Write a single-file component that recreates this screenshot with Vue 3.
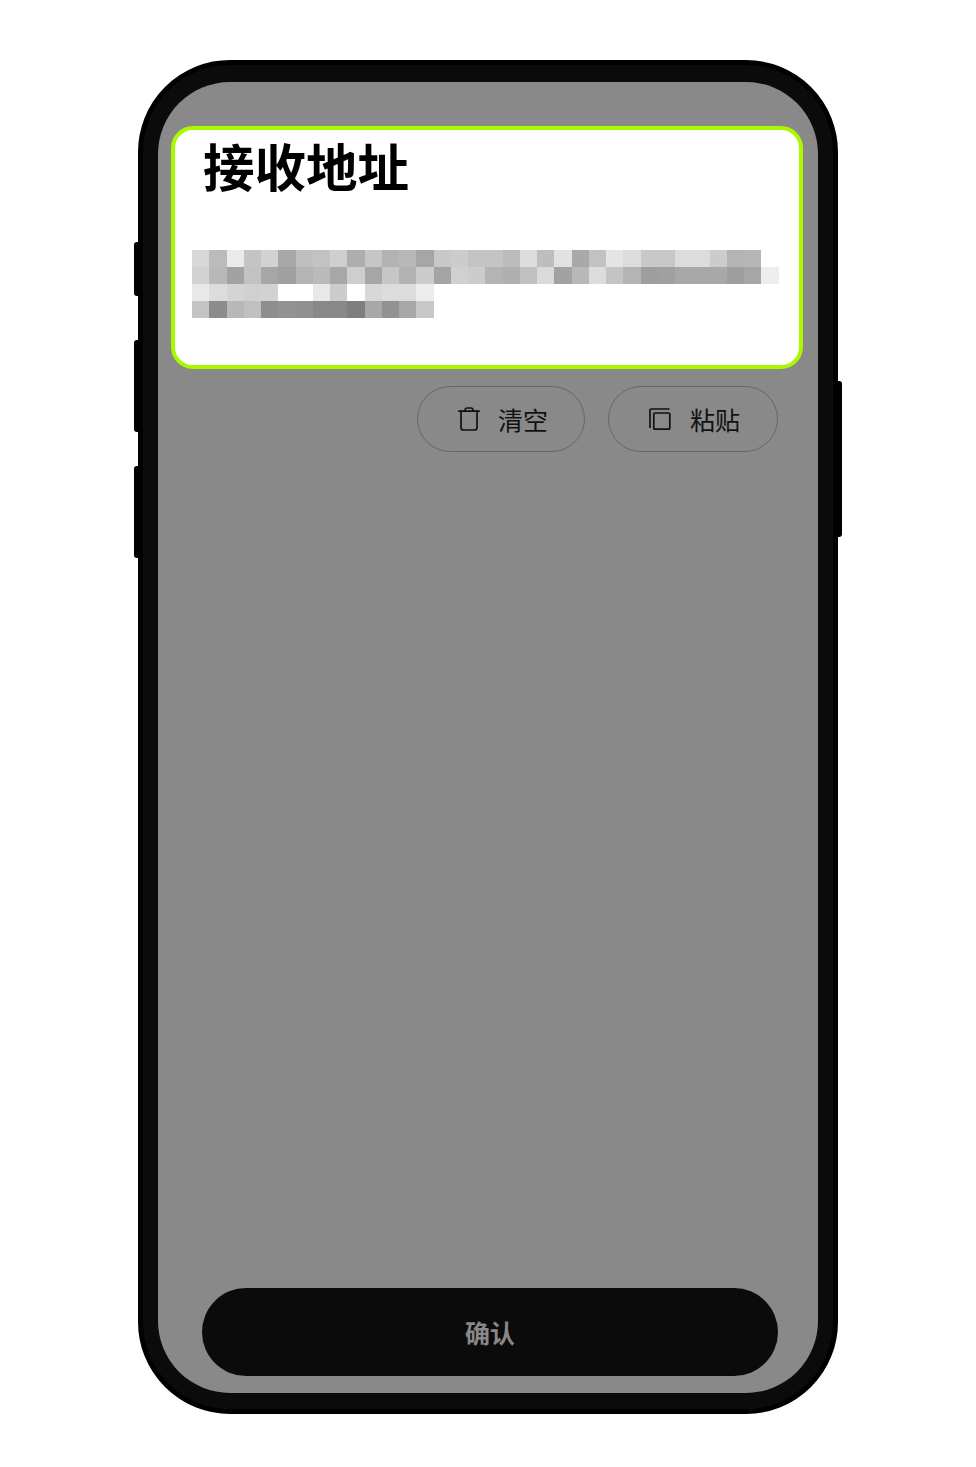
<script setup>
const rows = [
  ['d8','bb','ea','c4','d2','a8','bf','c2','cf','ae','c6','b3','b8','a6','c8','cc','c4','c4','bc','dc','be','e2','a9','c2','e4','dc','c8','c8','dc','dc','cc','b4','b6'],
  ['d2','b8','a2','c2','a6','a0','b4','ba','a8','ce','a6','c6','b2','cc','a4','d0','cc','b4','b0','c0','da','a2','b8','dc','c4','b4','9e','a0','a8','a8','a8','9e','a6','ee'],
  ['e8','dc','d4','d0','d2','ff','ff','e8','cc','ff','d8','dc','dc','ec'],
  ['c4','8c','b8','c0','8e','92','90','88','88','7e','a8','92','a8','c8']
]
</script>

<template>
  <div class="page">
    <div class="phone">
      <span class="side side-a"></span>
      <span class="side side-b"></span>
      <span class="side side-c"></span>
      <span class="side side-d"></span>
      <div class="bezel">
        <div class="screen">
          <section class="card">
            <h1 class="title">接收地址</h1>
            <div class="mosaic">
              <div v-for="(row, r) in rows" :key="r" class="mosaic-row">
                <i v-for="(c, n) in row" :key="n" class="cell" :style="{ background: '#' + c + c + c }"></i>
              </div>
            </div>
          </section>

          <div class="actions">
            <button class="pill pill-clear" type="button">
              <svg class="icon" width="22" height="24" viewBox="0 0 22 24" fill="none" stroke="#111" stroke-width="1.7" stroke-linecap="round" stroke-linejoin="round">
                <path d="M0.8 4.2H21.2" />
                <path d="M7 4V3.2C7 1.9 7.9 1 9.2 1H12.8C14.1 1 15 1.9 15 3.2V4" />
                <path d="M3 4.2V20.5C3 22 4 23 5.5 23H16.5C18 23 19 22 19 20.5V4.2" />
              </svg>
              <span>清空</span>
            </button>
            <button class="pill pill-paste" type="button">
              <svg class="icon" width="22" height="22" viewBox="0 0 22 22" fill="none" stroke="#111" stroke-width="1.7" stroke-linejoin="round">
                <path d="M1 20V2.5C1 1.6 1.6 1 2.5 1H20.5" />
                <rect x="4.8" y="5" width="16" height="16.2" rx="1" />
              </svg>
              <span>粘贴</span>
            </button>
          </div>

          <button class="confirm" type="button">确认</button>
        </div>
      </div>
    </div>
  </div>
</template>

<style>
html, body { margin: 0; background: #fff; }
</style>

<style scoped>
.page {
  width: 976px;
  height: 1467px;
  box-sizing: border-box;
  padding: 60px 138px 53px;
  font-family: "Noto Sans CJK SC", "Noto Sans", sans-serif;
}
.phone {
  position: relative;
  height: 100%;
  box-sizing: border-box;
  border: 5px solid #000;
  border-radius: 92px;
  background: #0b0b0b;
}
.side { position: absolute; background: #000; width: 5px; }
.side-a { left: -9px; top: 177px; height: 54px; border-radius: 3px 0 0 3px; }
.side-b { left: -9px; top: 275px; height: 92px; border-radius: 3px 0 0 3px; }
.side-c { left: -9px; top: 401px; height: 92px; border-radius: 3px 0 0 3px; }
.side-d { right: -9px; top: 316px; height: 156px; border-radius: 0 3px 3px 0; }
.bezel {
  height: 100%;
  box-sizing: border-box;
  padding: 17px 15px 16px;
}
.screen {
  height: 100%;
  box-sizing: border-box;
  display: flex;
  flex-direction: column;
  background: #898989;
  border-radius: 72px;
  padding: 44px 40px 17px 13px;
}
.card {
  height: 243px;
  margin-right: -25px;
  box-sizing: border-box;
  border: 4px solid #a9f900;
  border-radius: 22px;
  background: #fff;
  padding: 0 0 0 17px;
}
.title {
  margin: 0 0 0 11px;
  font-size: 51.5px;
  line-height: 69px;
  font-weight: 700;
  color: #000;
}
.mosaic { margin-top: 51px; display: flex; flex-direction: column; filter: blur(0.4px); }
.mosaic-row { display: flex; height: 17px; }
.cell { display: block; width: 17.25px; height: 100%; }
.actions {
  display: flex;
  justify-content: flex-end;
  gap: 23px;
  margin-top: 17px;
}
.pill {
  height: 66px;
  box-sizing: border-box;
  display: flex;
  align-items: center;
  justify-content: center;
  border: 1px solid #666;
  border-radius: 33px;
  background: transparent;
  color: #111;
  font-family: inherit;
  font-size: 25px;
  font-weight: 400;
  padding: 0;
}
.pill-clear { width: 168px; padding-left: 4px; gap: 18px; }
.pill-paste { width: 170px; padding-left: 3px; gap: 19px; }
.icon { flex: none; }
.confirm {
  margin-top: auto;
  margin-left: 31px;
  height: 88px;
  border: 0;
  border-radius: 44px;
  background: #0b0b0b;
  color: #888;
  font-family: inherit;
  font-size: 25px;
  font-weight: 700;
  padding: 0;
}
</style>
